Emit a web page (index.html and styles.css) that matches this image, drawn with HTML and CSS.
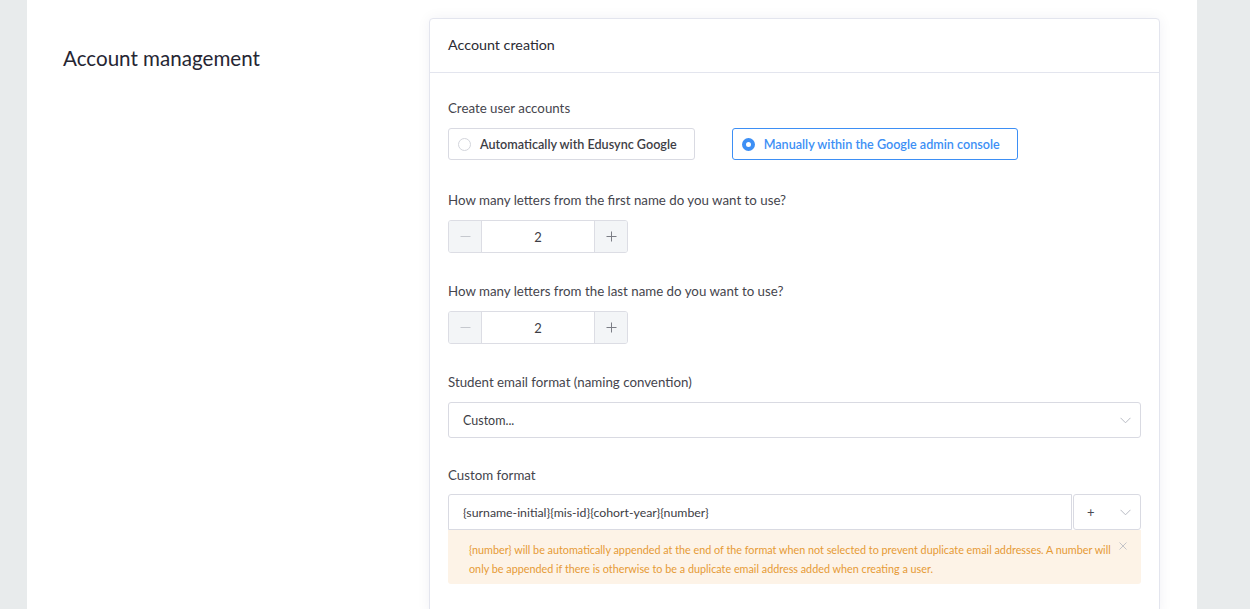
FILE: index.html
```html
<!DOCTYPE html>
<html lang="en">
<head>
<meta charset="utf-8">
<title>Account management</title>
<link rel="stylesheet" href="styles.css">
</head>
<body>
<div class="panel">
  <div class="side">
    <h1 class="side-title">Account management</h1>
  </div>
  <div class="card">
    <div class="card-header">Account creation</div>
    <div class="card-body">
      <div class="field">
        <div class="label">Create user accounts</div>
        <div class="radios">
          <div class="radio-box">
            <span class="radio"></span>
            <span class="radio-text">Automatically with Edusync Google</span>
          </div>
          <div class="radio-box checked">
            <span class="radio"></span>
            <span class="radio-text">Manually within the Google admin console</span>
          </div>
        </div>
      </div>

      <div class="field field-first-step">
        <div class="label">How many letters from the first name do you want to use?</div>
        <div class="stepper">
          <span class="step-btn minus"><svg width="11" height="11" viewBox="0 0 11 11"><path d="M0.5 5.5h10" stroke="currentColor" stroke-width="1"/></svg></span>
          <span class="step-value">2</span>
          <span class="step-btn plus"><svg width="11" height="11" viewBox="0 0 11 11"><path d="M0.5 5.5h10M5.5 0.5v10" stroke="currentColor" stroke-width="1"/></svg></span>
        </div>
      </div>

      <div class="field">
        <div class="label">How many letters from the last name do you want to use?</div>
        <div class="stepper">
          <span class="step-btn minus"><svg width="11" height="11" viewBox="0 0 11 11"><path d="M0.5 5.5h10" stroke="currentColor" stroke-width="1"/></svg></span>
          <span class="step-value">2</span>
          <span class="step-btn plus"><svg width="11" height="11" viewBox="0 0 11 11"><path d="M0.5 5.5h10M5.5 0.5v10" stroke="currentColor" stroke-width="1"/></svg></span>
        </div>
      </div>

      <div class="field field-select">
        <div class="label">Student email format (naming convention)</div>
        <div class="select">
          <span class="select-text">Custom...</span>
          <svg class="chev" width="11" height="7" viewBox="0 0 11 7"><path d="M0.5 0.8l5 5 5-5" fill="none" stroke="currentColor" stroke-width="1"/></svg>
        </div>
      </div>

      <div class="field field-custom">
        <div class="label">Custom format</div>
        <div class="input-group">
          <div class="input">{surname-initial}{mis-id}{cohort-year}{number}</div>
          <div class="addon">
            <span class="addon-plus">+</span>
            <svg class="chev" width="11" height="7" viewBox="0 0 11 7"><path d="M0.5 0.8l5 5 5-5" fill="none" stroke="currentColor" stroke-width="1"/></svg>
          </div>
        </div>
        <div class="alert">
          <p class="alert-text">{number} will be automatically appended at the end of the format when not selected to prevent duplicate email addresses. A number will only be appended if there is otherwise to be a duplicate email address added when creating a user.</p>
          <svg class="alert-close" width="8" height="8" viewBox="0 0 8 8"><path d="M0.5 0.5l7 7M7.5 0.5l-7 7" stroke="currentColor" stroke-width="1"/></svg>
        </div>
      </div>
    </div>
  </div>
</div>
</body>
</html>
```

FILE: styles.css
```css
html, body {
  margin: 0;
  padding: 0;
  height: 100%;
}
body {
  background: #e8ebec;
  font-family: "Lato", "Noto Sans", sans-serif;
  color: #3d3d45;
  overflow: hidden;
}
.panel {
  margin-left: 27px;
  width: 1170px;
  min-height: 100%;
  background: #ffffff;
  display: flex;
  align-items: flex-start;
  padding: 18px 37px 0 36px;
  box-sizing: border-box;
}
.side {
  width: 366px;
  flex: none;
}
.side-title {
  margin: 28px 0 0 0;
  font-size: 20.6px;
  line-height: 24px;
  font-weight: 400;
  color: #262633;
}
.card {
  width: 731px;
  flex: none;
  border: 1px solid #e3e5ee;
  border-radius: 4px;
  box-shadow: 0 0 14px rgba(40, 40, 80, 0.06);
  background: #fff;
  box-sizing: border-box;
}
.card-header {
  height: 54px;
  display: flex;
  align-items: center;
  padding: 0 18px 3px 18px;
  box-sizing: border-box;
  font-size: 14.3px;
  color: #2b2b33;
  border-bottom: 1px solid #e3e5ee;
}
.card-body {
  padding: 26px 18px 30px 18px;
}
.field + .field {
  margin-top: 29px;
}
.field.field-first-step {
  margin-top: 31px;
}
.field.field-custom {
  margin-top: 28px;
}
.label {
  font-size: 13.3px;
  line-height: 18px;
  color: #45454d;
  margin-bottom: 11px;
}
.field-custom .label {
  margin-bottom: 10px;
}
.radios {
  display: flex;
  gap: 37px;
}
.radio-box {
  height: 32px;
  box-sizing: border-box;
  border: 1px solid #d9dae2;
  border-radius: 3px;
  display: flex;
  align-items: center;
  padding: 0 17px 0 9px;
  font-size: 12.6px;
  color: #3d3d45;
}
.radio {
  width: 11px;
  height: 11px;
  border: 1px solid #d3d5dc;
  border-radius: 50%;
  margin-right: 9px;
  box-sizing: content-box;
}
.radio-box.checked {
  border-color: #3d8ff5;
  color: #3d8ff5;
  padding-right: 17px;
}
.radio-box.checked .radio {
  width: 5px;
  height: 5px;
  border: 4px solid #3d8ff5;
  background: #fff;
}
.radio-text {
  font-weight: 600;
}
.stepper {
  display: flex;
  width: 180px;
  height: 33px;
  border: 1px solid #dcdde4;
  border-radius: 3px;
  box-sizing: border-box;
  overflow: hidden;
}
.step-btn {
  width: 32px;
  flex: none;
  background: #f3f5f7;
  display: flex;
  align-items: center;
  justify-content: center;
}
.step-btn.minus {
  color: #c5c8ce;
  border-right: 1px solid #dcdde4;
}
.step-btn.plus {
  color: #7b7d85;
  border-left: 1px solid #dcdde4;
}
.step-value {
  flex: 1;
  display: flex;
  align-items: center;
  justify-content: center;
  font-size: 13px;
  color: #3d3d45;
}
.select {
  height: 36px;
  box-sizing: border-box;
  border: 1px solid #d9dae2;
  border-radius: 3px;
  display: flex;
  align-items: center;
  justify-content: space-between;
  padding: 0 9px 0 14px;
}
.select-text {
  font-size: 12.5px;
  color: #3d3d45;
}
.chev {
  color: #b8bbc4;
}
.input-group {
  display: flex;
  height: 36px;
}
.input {
  flex: 1;
  box-sizing: border-box;
  border: 1px solid #d9dae2;
  border-radius: 3px 0 0 0;
  display: flex;
  align-items: center;
  padding: 0 14px;
  font-size: 12.3px;
  color: #3d3d45;
}
.addon {
  width: 68px;
  flex: none;
  box-sizing: border-box;
  border: 1px solid #d9dae2;
  border-radius: 3px;
  margin-left: 1px;
  display: flex;
  align-items: center;
  justify-content: space-between;
  padding: 0 9px 0 13px;
}
.addon-plus {
  font-size: 13px;
  color: #4a4a52;
}
.alert {
  background: #fdf3e7;
  border-radius: 0 0 3px 3px;
  height: 54px;
  box-sizing: border-box;
  padding: 10px 14px 0 21px;
  display: flex;
  align-items: flex-start;
  gap: 3px;
}
.alert-text {
  margin: 0;
  font-size: 10.8px;
  line-height: 19px;
  color: #e69a35;
  flex: 1;
}
.alert-close {
  color: #c4c4c8;
  margin-top: 2px;
  flex: none;
}
```
